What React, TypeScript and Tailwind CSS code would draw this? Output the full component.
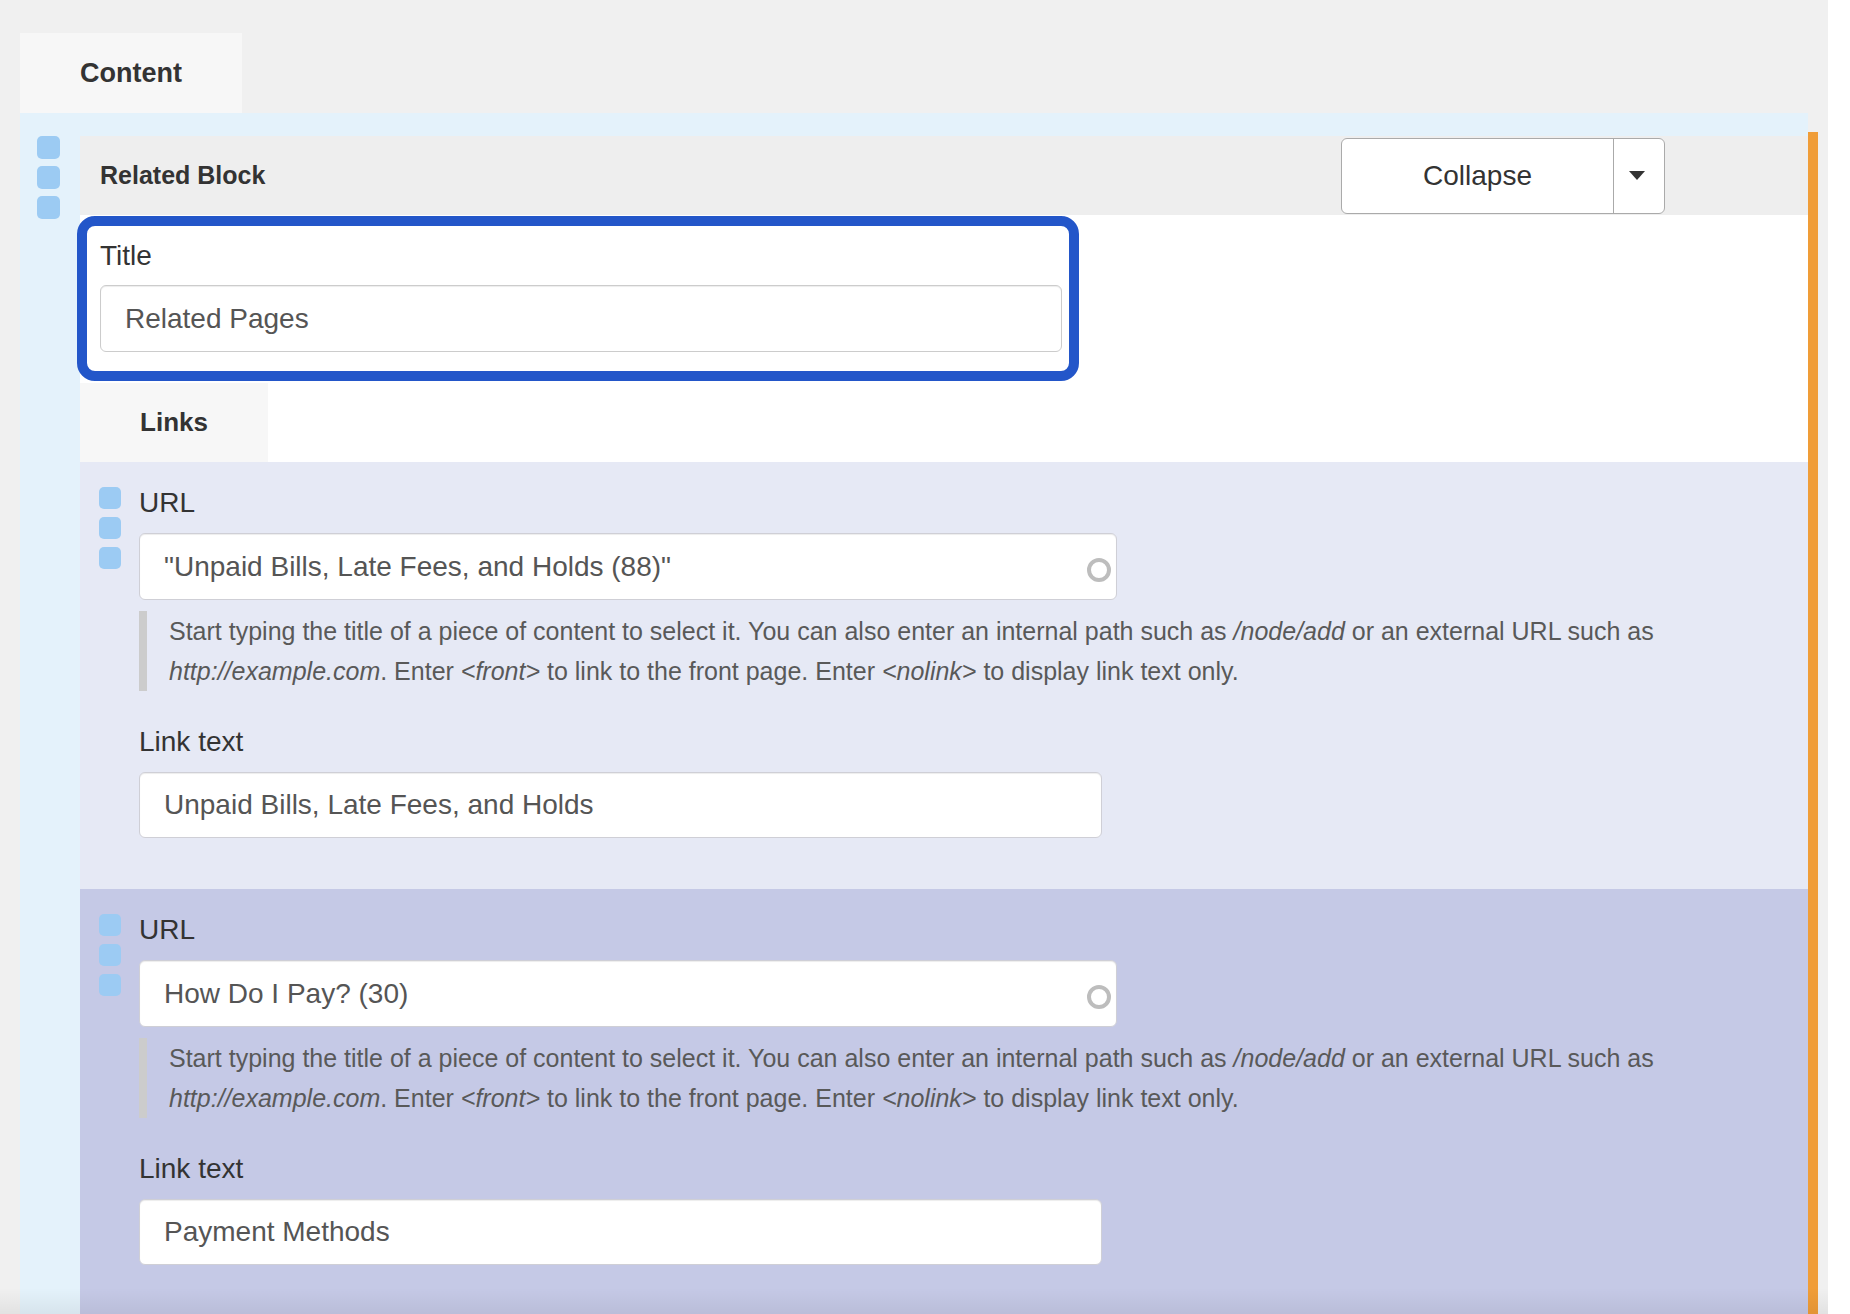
const HANDLE = "w-[23px] h-[23px] rounded-[5px] bg-[#9ccbf3]";

function Handles({ small }: { small?: boolean }) {
  const cls = small ? "w-[22px] h-[22px] rounded-[5px] bg-[#9ccbf3]" : HANDLE;
  return (
    <div className={small ? "flex flex-col gap-[8px] mt-[4px]" : "flex flex-col gap-[7px]"}>
      <span className={cls} />
      <span className={cls} />
      <span className={cls} />
    </div>
  );
}

function Throbber() {
  return (
    <svg width="26" height="26" viewBox="0 0 26 26" className="mt-[6px]">
      <circle cx="13" cy="13" r="10" fill="none" stroke="#bdbdbd" strokeWidth="4" />
    </svg>
  );
}

function HelpText() {
  return (
    <div className="mt-[11px] border-l-[8px] border-[#cccccc] pl-[22px] text-[25px] leading-[40px] text-[#595959]">
      Start typing the title of a piece of content to select it. You can also enter an internal path such as{" "}
      <em>/node/add</em> or an external URL such as <em>http://example.com</em>. Enter <em>&lt;front&gt;</em> to
      link to the front page. Enter <em>&lt;nolink&gt;</em> to display link text only.
    </div>
  );
}

interface LinkItemProps {
  url: string;
  text: string;
  bg: string;
}

function LinkItem({ url, text, bg }: LinkItemProps) {
  return (
    <div className={`flex gap-[18px] pl-[19px] pr-[18px] pt-[21px] pb-[51px] ${bg}`}>
      <Handles small />
      <div className="flex-1">
        <div className="text-[28px] leading-[40px] text-[#333]">URL</div>
        <div className="mt-[10px] w-[978px] h-[67px] bg-white border border-[#cfcfd6] rounded-[6px] flex items-center justify-between pl-[24px] pr-[4px] text-[28px] text-[#555] shadow-[inset_0_1px_1px_rgba(0,0,0,0.075)]">
          <span>{url}</span>
          <Throbber />
        </div>
        <HelpText />
        <div className="mt-[31px] text-[28px] leading-[40px] text-[#333]">Link text</div>
        <div className="mt-[10px] w-[963px] h-[66px] bg-white border border-[#cfcfd6] rounded-[6px] flex items-center pl-[24px] text-[28px] text-[#555] shadow-[inset_0_1px_1px_rgba(0,0,0,0.075)]">
          {text}
        </div>
      </div>
    </div>
  );
}

export default function App() {
  return (
    <div className="relative h-[1314px] overflow-hidden bg-white font-['Liberation_Sans',Arial,sans-serif] text-[#333]">
      <div className="w-[1828px] h-full bg-[#f0f0f0] pl-[20px] pr-[10px] pt-[33px]">
        {/* Content tab */}
        <div className="w-[222px] h-[80px] bg-[#f7f7f7] flex items-center justify-center text-[27px] font-bold text-[#333]">
          Content
        </div>

        <div className="flex">
          <div className="flex-1 flex gap-[20px] bg-[#e4f2fb] pl-[17px] pt-[23px]">
            <Handles />
            <div className="flex-1">
              {/* Block header */}
              <div className="h-[79px] bg-[#eeeeee] flex items-center justify-between pl-[20px] pr-[143px]">
                <span className="text-[25px] font-bold text-[#333]">Related Block</span>
                <div className="flex h-[76px] w-[324px] bg-white border border-[#aaaaaa] rounded-[6px]">
                  <div className="w-[271px] flex items-center justify-center text-[28px] text-[#333]">Collapse</div>
                  <div className="flex-1 border-l border-[#aaaaaa] flex items-center justify-center pr-[4px]">
                    <svg width="16" height="9" viewBox="0 0 16 9">
                      <path d="M0 0h16L8 9z" fill="#333" />
                    </svg>
                  </div>
                </div>
              </div>

              <div className="bg-white">
                {/* Focused title field */}
                <div className="relative -left-[3px] top-[1px] w-[1002px] h-[165px] border-[10px] border-[#2356c9] rounded-[18px] pl-[13px] pt-[10px]">
                  <div className="text-[28px] leading-[40px] text-[#333]">Title</div>
                  <div className="mt-[9px] w-[962px] h-[67px] border border-[#cccccc] rounded-[6px] flex items-center pl-[24px] text-[28px] text-[#555] shadow-[inset_0_1px_1px_rgba(0,0,0,0.075)]">
                    Related Pages
                  </div>
                </div>

                {/* Links tab */}
                <div className="mt-[3px] w-[188px] h-[79px] bg-[#f7f7f7] flex items-center justify-center text-[26px] font-bold text-[#333]">
                  Links
                </div>
              </div>

              <LinkItem url={'"Unpaid Bills, Late Fees, and Holds (88)"'} text="Unpaid Bills, Late Fees, and Holds" bg="bg-[#e6e9f5]" />
              <LinkItem url="How Do I Pay? (30)" text="Payment Methods" bg="bg-[#c5c9e6]" />
            </div>
          </div>
          <div className="w-[10px] mt-[19px] bg-[#f09d38]" />
        </div>
      </div>

      <div className="absolute bottom-0 left-0 right-[22px] h-[26px] bg-linear-to-b from-transparent to-[rgba(0,0,0,0.06)]" />
    </div>
  );
}
